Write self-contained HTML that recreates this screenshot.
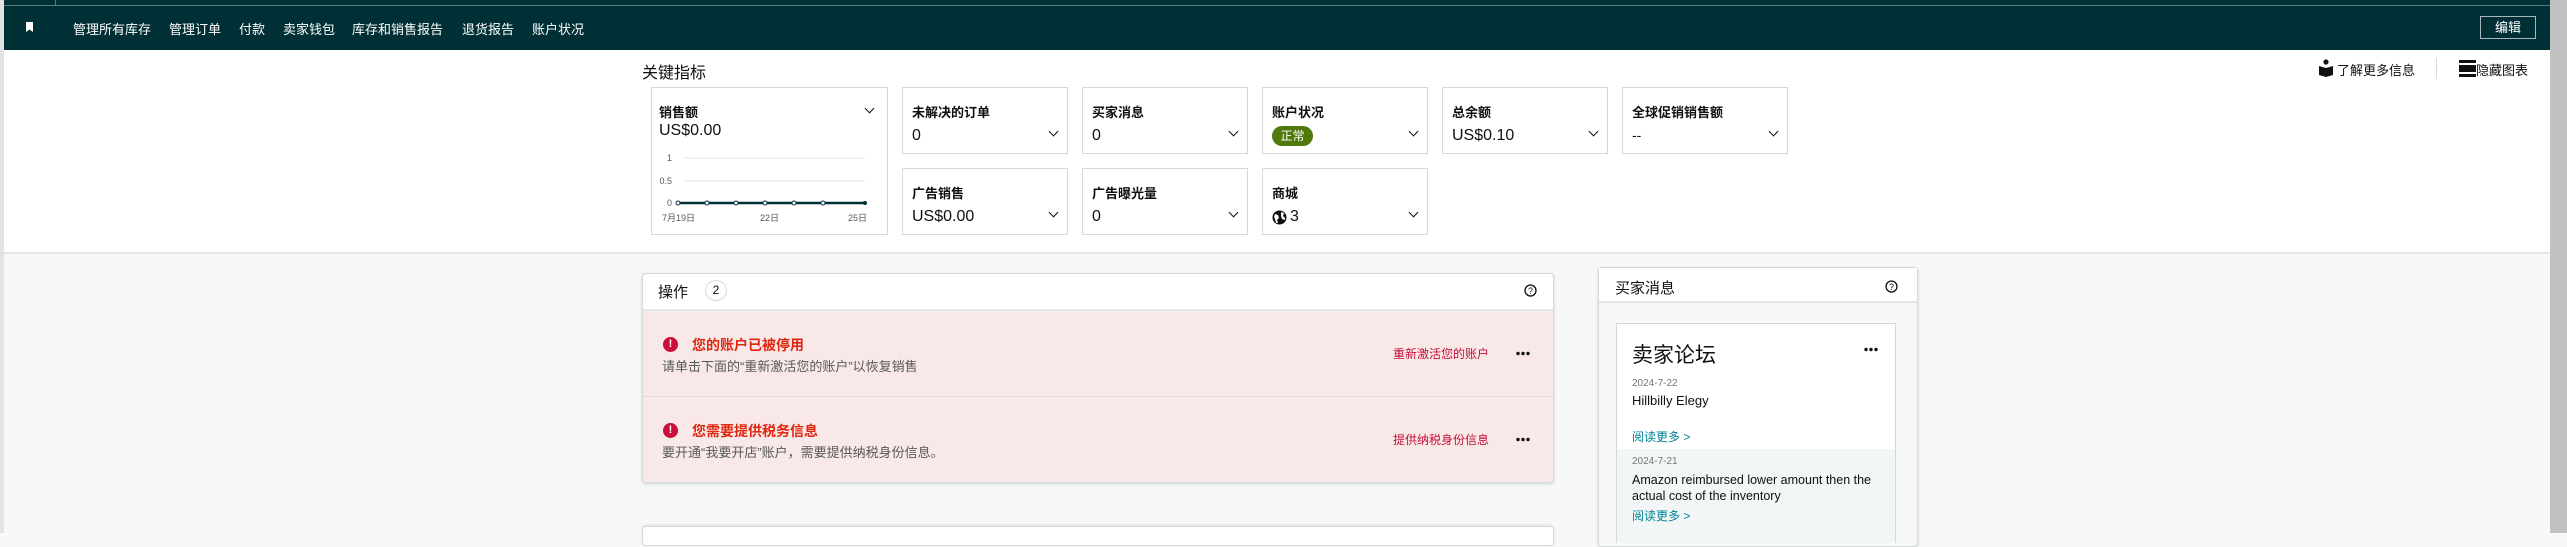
<!DOCTYPE html>
<html><head><meta charset="utf-8"><style>
*{margin:0;padding:0;box-sizing:border-box}
body{width:2567px;height:533px;overflow:hidden;background:#f7f8f8;font-family:"Liberation Sans","Noto Sans CJK SC",sans-serif;color:#0f1111;position:relative}
.a{position:absolute;white-space:nowrap}
.nav{left:4px;top:0;width:2546px;height:50px;background:#002f36}
.navt{color:#fff;font-size:13px;top:19px}
.card{position:absolute;background:#fff;border:1px solid #d5d9d9;width:166px;height:67px}
.ct{position:absolute;left:9px;top:14px;font-size:13px;font-weight:bold;color:#0f1111}
.cv{position:absolute;left:9px;top:39px;font-size:16px;color:#0f1111}
.chev{position:absolute;right:10px;top:40px;width:7px;height:7px;border-right:1.8px solid #0f1111;border-bottom:1.8px solid #0f1111;transform:rotate(45deg)}
</style></head><body>
<div class="a" style="left:0;top:0;width:4px;height:533px;background:#e3e3e3"></div>
<div class="a" style="left:2550px;top:0;width:17px;height:533px;background:#c1c1c1"></div>
<div class="a" style="left:4px;top:50px;width:2546px;height:204px;background:#fff;border-bottom:2px solid #e3e6e6"></div>
<div class="a nav"></div>
<div class="a" style="left:4px;top:5px;width:2546px;height:1px;background:#5d7a7e"></div>
<div class="a" style="left:55px;top:0;width:1px;height:5px;background:#5d7a7e"></div>
<div class="a" style="left:26px;top:22px;width:7px;height:10px;background:#fff;clip-path:polygon(0 0,100% 0,100% 100%,50% 75%,0 100%)"></div>
<div class="a navt" style="left:73px">管理所有库存</div>
<div class="a navt" style="left:169px">管理订单</div>
<div class="a navt" style="left:239px">付款</div>
<div class="a navt" style="left:283px">卖家钱包</div>
<div class="a navt" style="left:352px">库存和销售报告</div>
<div class="a navt" style="left:462px">退货报告</div>
<div class="a navt" style="left:532px">账户状况</div>
<div class="a" style="left:2480px;top:16px;width:56px;height:23px;border:1px solid #aab7b8;color:#fff;font-size:13px;text-align:center;line-height:21px">编辑</div>

<div class="a" style="left:642px;top:59px;font-size:16px;color:#0f1111">关键指标</div>
<svg class="a" style="left:2318px;top:58px" width="16" height="20"><circle cx="8" cy="4" r="2.6" fill="#0f1111"/><path d="M1 8 L8 10 L15 8 L15 17 L8 19 L1 17Z" fill="#0f1111"/></svg>
<div class="a" style="left:2337px;top:60px;font-size:13px">了解更多信息</div>
<div class="a" style="left:2436px;top:58px;width:1px;height:21px;background:#d5d9d9"></div>
<svg class="a" style="left:2459px;top:60px" width="17" height="17"><rect x="0" y="0" width="17" height="3" fill="#0f1111"/><rect x="0" y="5" width="17" height="7" fill="#0f1111"/><rect x="0" y="14" width="17" height="3" fill="#0f1111"/></svg>
<div class="a" style="left:2476px;top:60px;font-size:13px">隐藏图表</div>

<div class="card" style="left:651px;top:87px;width:237px;height:148px">
<div class="ct" style="left:7px">销售额</div><div class="chev" style="top:17px;right:14px"></div>
<div class="cv" style="left:7px;top:34px">US$0.00</div>
<svg style="position:absolute;left:0;top:0" width="237" height="148">
<g font-size="9" fill="#565959" font-family="Liberation Sans,Noto Sans CJK SC,sans-serif">
<text x="20" y="73" text-anchor="end">1</text><text x="20" y="96" text-anchor="end">0.5</text><text x="20" y="118" text-anchor="end">0</text>
<text x="10" y="133">7月19日</text><text x="108" y="133">22日</text><text x="196" y="133">25日</text></g>
<line x1="32" y1="70" x2="213" y2="70" stroke="#e3e6e6"/><line x1="32" y1="93" x2="213" y2="93" stroke="#e3e6e6"/>
<line x1="26" y1="115" x2="213" y2="115" stroke="#002f36" stroke-width="2.5"/>
<g fill="#fff" stroke="#002f36"><circle cx="26" cy="115" r="2"/><circle cx="55" cy="115" r="2"/><circle cx="84" cy="115" r="2"/><circle cx="113" cy="115" r="2"/><circle cx="142" cy="115" r="2"/><circle cx="171" cy="115" r="2"/></g>
<circle cx="213" cy="115" r="2" fill="#002f36"/>
</svg></div>
<div class="card" style="left:902px;top:87px"><div class="ct">未解决的订单</div><div class="cv">0</div><div class="chev"></div></div>
<div class="card" style="left:1082px;top:87px"><div class="ct">买家消息</div><div class="cv">0</div><div class="chev"></div></div>
<div class="card" style="left:1262px;top:87px"><div class="ct">账户状况</div><div style="position:absolute;left:9px;top:38px;width:41px;height:20px;border-radius:10px;background:#507a0c;color:#fff;font-size:12px;text-align:center;line-height:20px">正常</div><div class="chev"></div></div>
<div class="card" style="left:1442px;top:87px"><div class="ct">总余额</div><div class="cv">US$0.10</div><div class="chev"></div></div>
<div class="card" style="left:1622px;top:87px"><div class="ct">全球促销销售额</div><div class="cv" style="font-size:14px">--</div><div class="chev"></div></div>
<div class="card" style="left:902px;top:168px"><div class="ct">广告销售</div><div class="cv">US$0.00</div><div class="chev"></div></div>
<div class="card" style="left:1082px;top:168px"><div class="ct">广告曝光量</div><div class="cv">0</div><div class="chev"></div></div>
<div class="card" style="left:1262px;top:168px"><div class="ct">商城</div><svg style="position:absolute;left:9px;top:41px" width="15" height="15"><circle cx="7.5" cy="7.5" r="7" fill="#0f1111"/><path d="M3 4 L6 5 L7 8 L5 10 L6 13 L4 13 L3 9 L2 7Z M9 2 L12 3 L11 6 L13 8 L13 10 L10 9 L9 6Z" fill="#fff"/></svg><div class="cv" style="left:27px">3</div><div class="chev"></div></div>

<div class="a" style="left:642px;top:273px;width:912px;height:210px;background:#fff;border:1px solid #d5d9d9;border-radius:4px;box-shadow:0 1px 3px rgba(0,0,0,.15)"></div>
<div class="a" style="left:658px;top:281px;font-size:15px">操作</div>
<div class="a" style="left:705px;top:280px;width:22px;height:21px;border:1px solid #d5d9d9;border-radius:50%;font-size:12px;text-align:center;line-height:19px">2</div>
<svg class="a" style="left:1524px;top:284px" width="13" height="13"><circle cx="6.5" cy="6.5" r="5.5" fill="none" stroke="#0f1111" stroke-width="1.3"/><text x="6.5" y="10" font-size="9" text-anchor="middle" font-family="Liberation Sans" fill="#0f1111">?</text></svg>
<div class="a" style="left:643px;top:309px;width:910px;height:2px;background:#e3e6e6"></div>
<div class="a" style="left:643px;top:311px;width:910px;height:85px;background:#f9e8e8"></div>
<div class="a" style="left:643px;top:396px;width:910px;height:1px;background:#dcdcdc"></div>
<div class="a" style="left:643px;top:397px;width:910px;height:85px;background:#f9e8e8;border-radius:0 0 4px 4px"></div>

<div class="a" style="left:663px;top:337px;width:15px;height:15px;border-radius:50%;background:#cc0c39;color:#fff;font-size:11px;font-weight:bold;text-align:center;line-height:15px">!</div>
<div class="a" style="left:692px;top:335px;font-size:14px;font-weight:bold;color:#e0260f">您的账户已被停用</div>
<div class="a" style="left:662px;top:356px;font-size:13px;color:#565959">请单击下面的“重新激活您的账户”以恢复销售</div>
<div class="a" style="left:1393px;top:345px;font-size:12px;color:#c40f3c">重新激活您的账户</div>
<svg class="a" style="left:1516px;top:351px" width="14" height="5"><circle cx="2" cy="2.5" r="1.7" fill="#0f1111"/><circle cx="7" cy="2.5" r="1.7" fill="#0f1111"/><circle cx="12" cy="2.5" r="1.7" fill="#0f1111"/></svg>

<div class="a" style="left:663px;top:423px;width:15px;height:15px;border-radius:50%;background:#cc0c39;color:#fff;font-size:11px;font-weight:bold;text-align:center;line-height:15px">!</div>
<div class="a" style="left:692px;top:421px;font-size:14px;font-weight:bold;color:#e0260f">您需要提供税务信息</div>
<div class="a" style="left:662px;top:442px;font-size:13px;color:#565959">要开通“我要开店”账户，需要提供纳税身份信息。</div>
<div class="a" style="left:1393px;top:431px;font-size:12px;color:#c40f3c">提供纳税身份信息</div>
<svg class="a" style="left:1516px;top:437px" width="14" height="5"><circle cx="2" cy="2.5" r="1.7" fill="#0f1111"/><circle cx="7" cy="2.5" r="1.7" fill="#0f1111"/><circle cx="12" cy="2.5" r="1.7" fill="#0f1111"/></svg>

<div class="a" style="left:642px;top:526px;width:912px;height:20px;background:#fff;border:1px solid #d5d9d9;border-radius:4px;box-shadow:0 -1px 3px rgba(0,0,0,.1)"></div>

<div class="a" style="left:1598px;top:267px;width:320px;height:280px;background:#f7f8f8;border:1px solid #d5d9d9;border-radius:4px;box-shadow:0 1px 3px rgba(0,0,0,.15)"></div>
<div class="a" style="left:1599px;top:268px;width:318px;height:35px;background:#fff;border-bottom:2px solid #e3e6e6"></div>
<div class="a" style="left:1615px;top:277px;font-size:15px">买家消息</div>
<svg class="a" style="left:1885px;top:280px" width="13" height="13"><circle cx="6.5" cy="6.5" r="5.5" fill="none" stroke="#0f1111" stroke-width="1.3"/><text x="6.5" y="10" font-size="9" text-anchor="middle" font-family="Liberation Sans" fill="#0f1111">?</text></svg>
<div class="a" style="left:1616px;top:323px;width:280px;height:220px;background:#fff;border:1px solid #d5d9d9"></div>
<div class="a" style="left:1617px;top:449px;width:278px;height:94px;background:#f3f6f6"></div>
<div class="a" style="left:1632px;top:339px;font-size:21px;color:#0f1111">卖家论坛</div>
<svg class="a" style="left:1864px;top:347px" width="14" height="5"><circle cx="2" cy="2.5" r="1.7" fill="#0f1111"/><circle cx="7" cy="2.5" r="1.7" fill="#0f1111"/><circle cx="12" cy="2.5" r="1.7" fill="#0f1111"/></svg>
<div class="a" style="left:1632px;top:378px;font-size:10px;color:#767676">2024-7-22</div>
<div class="a" style="left:1632px;top:393px;font-size:13px">Hillbilly Elegy</div>
<div class="a" style="left:1632px;top:428px;font-size:12px;color:#008296">阅读更多 &gt;</div>
<div class="a" style="left:1632px;top:456px;font-size:10px;color:#767676">2024-7-21</div>
<div class="a" style="left:1632px;top:472px;font-size:12.5px;line-height:16px;white-space:normal;width:260px">Amazon reimbursed lower amount then the actual cost of the inventory</div>
<div class="a" style="left:1632px;top:507px;font-size:12px;color:#008296">阅读更多 &gt;</div>
</body></html>
